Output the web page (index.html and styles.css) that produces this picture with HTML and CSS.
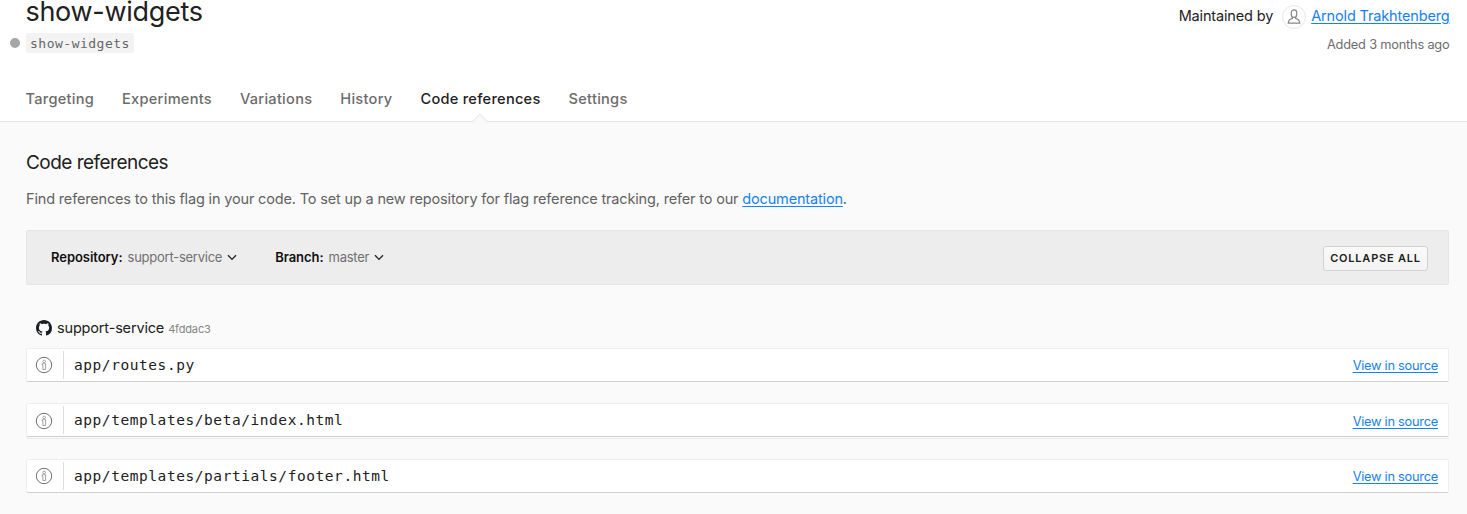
FILE: index.html
```html
<!DOCTYPE html>
<html lang="en">
<head>
<meta charset="utf-8">
<title>show-widgets</title>
<link rel="stylesheet" href="styles.css">
</head>
<body>
<svg class="sprite" aria-hidden="true">
  <symbol id="info" viewBox="0 0 18 18"><circle cx="9" cy="9" r="7.7" fill="none" stroke="#707070" stroke-width="1"/><circle cx="9.200" cy="5.400" r="1.300" fill="none" stroke="#8c8c8c" stroke-width=".8"/><path d="M7.200 7.700h3.400v5.800H7.900V9.100h-.7z" fill="none" stroke="#8c8c8c" stroke-width=".8"/></symbol>
  <symbol id="chevron" viewBox="0 0 10 7"><path d="M1 1.200l4 4.200 4-4.200" fill="none" stroke="#222" stroke-width="1.300"/></symbol>
</svg>
<header class="header">
  <div class="flag">
    <h1 class="title">show-widgets</h1>
    <div class="key"><span class="dot"></span><code class="code">show-widgets</code></div>
  </div>
  <div class="meta">
    <div class="maintainer"><span class="lift">Maintained by</span>
      <span class="avatar"><svg width="14" height="18" viewBox="0 0 14 18"><rect x="4.300" y="1.800" width="5.400" height="7.600" rx="2.700"/><path d="M5.400 9v1.300c-2.500.6-3.900 1.700-4.200 4.900h11.600c-.3-3.200-1.700-4.300-4.200-4.900V9"/></svg></span>
      <a class="link lift" href="#">Arnold Trakhtenberg</a></div>
    <div class="added">Added 3 months ago</div>
  </div>
</header>
<nav class="tabs">
  <a class="tab">Targeting</a><a class="tab">Experiments</a><a class="tab">Variations</a><a class="tab">History</a><a class="tab active">Code references</a><a class="tab">Settings</a>
</nav>
<main class="main">
  <h2 class="heading">Code references</h2>
  <p class="intro">Find references to this flag in your code. To set up a new repository for flag reference tracking, refer to our <a class="link" href="#">documentation</a>.</p>
  <div class="filters">
    <div class="filter repo"><b>Repository:</b><span>support-service</span><svg class="chev"><use href="#chevron"/></svg></div>
    <div class="filter"><b>Branch:</b><span>master</span><svg class="chev"><use href="#chevron"/></svg></div>
    <button class="collapse">COLLAPSE ALL</button>
  </div>
  <div class="repohead">
    <svg class="github" viewBox="0 0 16 16"><path fill="#1b1f23" d="M8 0C3.580 0 0 3.580 0 8c0 3.540 2.290 6.530 5.470 7.590.4.070.55-.17.55-.38 0-.19-.01-.82-.01-1.490-2.010.37-2.530-.49-2.690-.94-.09-.23-.48-.94-.82-1.130-.28-.15-.68-.52-.01-.53.63-.01 1.080.58 1.230.82.72 1.210 1.870.87 2.330.66.07-.52.28-.87.51-1.070-1.780-.2-3.640-.89-3.640-3.950 0-.87.31-1.590.82-2.150-.08-.2-.36-1.020.08-2.120 0 0 .67-.21 2.200.82.64-.18 1.320-.27 2-.27s1.360.09 2 .27c1.530-1.040 2.200-.82 2.200-.82.44 1.100.16 1.920.08 2.120.51.56.82 1.270.82 2.150 0 3.070-1.870 3.750-3.650 3.950.29.25.54.73.54 1.480 0 1.070-.01 1.930-.01 2.200 0 .21.15.46.55.38A8.010 8.010 0 0 0 16 8c0-4.420-3.580-8-8-8z"/></svg>
    <span class="reponame">support-service</span><span class="sha">4fddac3</span>
  </div>
  <div class="file"><span class="cell"><svg class="info"><use href="#info"/></svg></span><span class="path">app/routes.py</span><a class="link view" href="#">View in source</a></div>
  <div class="file stacked"><span class="cell"><svg class="info"><use href="#info"/></svg></span><span class="path">app/templates/beta/index.html</span><a class="link view" href="#">View in source</a></div>
  <div class="file"><span class="cell"><svg class="info"><use href="#info"/></svg></span><span class="path">app/templates/partials/footer.html</span><a class="link view" href="#">View in source</a></div>
</main>
</body>
</html>
```
FILE: styles.css
```css
* { box-sizing: border-box; }
body { margin: 0; height: 514px; overflow: hidden; background: #fafafa; color: #212121; font: 15px/20px Inter, sans-serif; }
.sprite { display: none; }
h1, h2, p { margin: 0; font-weight: 400; }
.link { color: #1481f5; text-decoration: underline; text-underline-offset: 2px; }
.header { display: flex; justify-content: space-between; height: 77px; padding: 0 17.5px 0 10px; background: #fff; }
.title { margin-left: 15.5px; height: 29px; font-size: 27px; line-height: 24px; letter-spacing: -.3px; }
.key { display: flex; align-items: center; gap: 6px; margin-top: 4px; }
.dot { width: 10px; height: 10px; border-radius: 50%; background: #a7a7a7; }
.code { display: block; height: 20px; padding: 0 4px; border-radius: 2px; background: #f3f3f3; color: #666; font: 13px/21px "DejaVu Sans Mono", monospace; letter-spacing: .5px; }
.meta { display: flex; flex-direction: column; align-items: flex-end; padding-top: 4px; }
.maintainer { display: flex; align-items: center; height: 25px; font-size: 14.5px; letter-spacing: -.15px; }
.lift { padding-bottom: 1px; }
.avatar { display: flex; align-items: center; justify-content: center; width: 24px; height: 24px; margin: 0 5px 0 9px; border: 1px solid #e6e6e6; border-radius: 50%; }
.avatar svg { fill: none; stroke: #888; stroke-width: 1.2; }
.added { margin-top: 6px; color: #6e6e6e; font-size: 12.8px; letter-spacing: -.2px; }
.tabs { display: flex; gap: 28px; height: 45px; padding-left: 25.5px; border-bottom: 1px solid #e4e4e4; background: #fff; }
.tab { position: relative; height: 45px; padding-top: 12px; color: #6c6c6c; font-size: 14.6px; font-weight: 500; letter-spacing: .26px; }
.active { color: #212121; }
.active::after { content: ""; position: absolute; left: 50%; bottom: -6px; width: 11px; height: 11px; margin-left: -6.5px; border: 1px solid #e8e8e8; border-right: 0; border-bottom: 0; background: linear-gradient(135deg, #fafafa 60%, transparent 60%); transform: rotate(45deg); }
.main { padding: 28px 18px 0 26px; }
.heading { height: 26px; font-size: 19px; line-height: 26px; letter-spacing: -.52px; }
.intro { margin-top: 13px; height: 20px; color: #626262; font-size: 14.5px; letter-spacing: -.163px; }
.filters { display: flex; align-items: center; height: 55px; margin-top: 21px; padding: 0 20px 1px 24px; border: 1px solid #e6e6e6; border-radius: 2px; background: #ededed; }
.filter { display: flex; align-items: center; color: #707070; font-size: 13px; letter-spacing: -.25px; }
.filter b { margin-right: 5px; color: #111; font-weight: 600; letter-spacing: -.05px; }
.repo { margin-right: 38px; }
.chev { width: 10px; height: 7px; margin-left: 5px; }
.collapse { position: relative; top: 1px; width: 105px; height: 25px; margin-left: auto; padding: 0; border: 1px solid #d2d2d2; border-radius: 3px; background: linear-gradient(#fafafa, #f3f3f3); color: #212121; font: 600 11px/22px Inter, sans-serif; letter-spacing: .8px; white-space: nowrap; }
.repohead { display: flex; align-items: center; height: 20px; margin: 33px 0 9.8px 10px; }
.github { width: 16px; height: 16px; margin-right: 5px; }
.reponame { font-size: 14.5px; letter-spacing: -.17px; }
.sha { margin-left: 4px; padding-top: 1px; color: #858585; font-size: 11px; letter-spacing: -.15px; }
.file { display: flex; align-items: center; height: 34px; margin-bottom: 21.4px; padding-right: 10px; border: 1px solid #eee; border-bottom-color: #d0d0d0; border-radius: 2px; background: #fff; }
.stacked { box-shadow: 0 1px #fafafa, 0 2px #e9e9e9; }
.cell { display: flex; align-items: center; width: 37px; height: 28px; padding-left: 8px; border-right: 1px solid #ddd; }
.info { width: 18px; height: 18px; margin-top: 1px; }
.path { margin-left: 10px; font: 14.5px/20px "DejaVu Sans Mono", monospace; letter-spacing: .56px; }
.view { margin-left: auto; padding-top: 3px; font-size: 12.8px; letter-spacing: -.25px; }
```
